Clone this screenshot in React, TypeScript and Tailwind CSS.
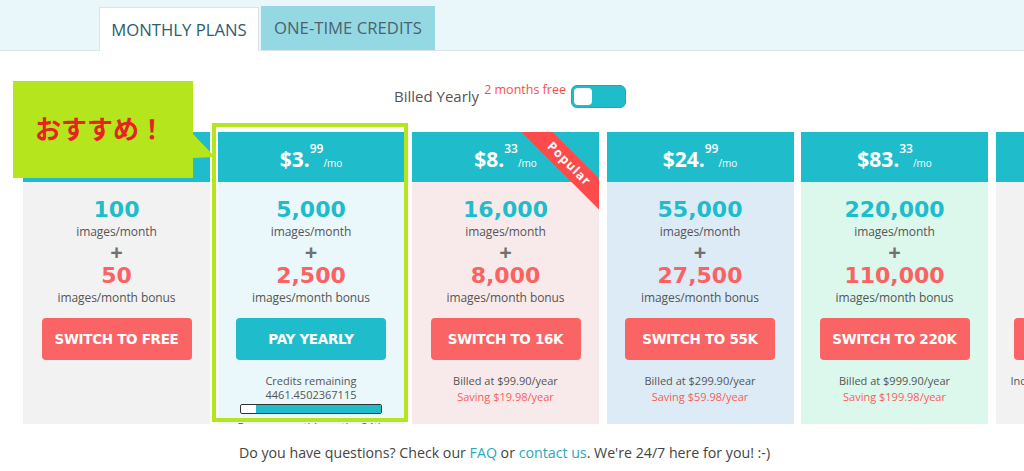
import React from "react";

type Plan = {
  dollars: string;
  cents: string;
  images: string;
  bonus: string;
  button: string;
  bg: string;
  current?: boolean;
  popular?: boolean;
  billed?: string;
  saving?: string;
  note?: string;
};

const plans: Plan[] = [
  { dollars: "$0.", cents: "00", images: "100", bonus: "50", button: "SWITCH TO FREE", bg: "bg-[#f2f2f2]" },
  { dollars: "$3.", cents: "99", images: "5,000", bonus: "2,500", button: "PAY YEARLY", bg: "bg-[#eaf7fb]", current: true },
  {
    dollars: "$8.",
    cents: "33",
    images: "16,000",
    bonus: "8,000",
    button: "SWITCH TO 16K",
    bg: "bg-[#f8eaea]",
    popular: true,
    billed: "Billed at $99.90/year",
    saving: "Saving $19.98/year",
  },
  {
    dollars: "$24.",
    cents: "99",
    images: "55,000",
    bonus: "27,500",
    button: "SWITCH TO 55K",
    bg: "bg-[#ddebf7]",
    billed: "Billed at $299.90/year",
    saving: "Saving $59.98/year",
  },
  {
    dollars: "$83.",
    cents: "33",
    images: "220,000",
    bonus: "110,000",
    button: "SWITCH TO 220K",
    bg: "bg-[#dcf7ec]",
    billed: "Billed at $999.90/year",
    saving: "Saving $199.98/year",
  },
  {
    dollars: "$416.",
    cents: "66",
    images: "1,000,000",
    bonus: "500,000",
    button: "SWITCH TO 1M",
    bg: "bg-[#f2f2f2]",
    note: "Includes priority email support",
  },
];

const credits = 4461.4502367115;
const total = 5000;

function PlanCard({ plan }: { plan: Plan }) {
  const num = "font-['DejaVu_Sans',sans-serif] font-bold text-[22px] leading-[28px]";
  return (
    <div className="relative w-[187px] shrink-0">
      <div className="relative w-full overflow-hidden">
        <div className="h-[50px] bg-[#1fbdcb] flex items-center justify-center text-white">
          <div className="flex items-start mt-[4px]">
            <span className="text-[21px] font-bold leading-[26px]">{plan.dollars}</span>
            <span className="text-[12px] font-semibold leading-[12px] -mt-[3px]">{plan.cents}</span>
            <span className="text-[10px] leading-[12px] mt-[11px]">/mo</span>
          </div>
        </div>
        <div className={`h-[242px] overflow-hidden pt-[14px] text-center text-[#555] ${plan.bg}`}>
          <div className={`${num} text-[#1fbdcb]`}>{plan.images}</div>
          <div className="text-[12px] leading-[16px] tracking-[-0.1px]">images/month</div>
          <div className="text-[22px] font-bold leading-[22px] text-[#707070]">+</div>
          <div className={`${num} text-[#fb6262]`}>{plan.bonus}</div>
          <div className="text-[12px] leading-[16px] tracking-[-0.1px]">images/month bonus</div>
          <button
            className={`block mx-auto mt-[12px] h-[42px] w-[150px] rounded-[4px] text-white font-['DejaVu_Sans',sans-serif] font-bold text-[13.5px] tracking-[-0.3px] ${
              plan.current ? "bg-[#1fbdcb]" : "bg-[#fb6464]"
            }`}
          >
            {plan.button}
          </button>
          {plan.current && (
            <div className="mt-[14px] text-[11px] leading-[14px]">
              <div>Credits remaining</div>
              <div>{credits}</div>
              <div className="mx-auto mt-[2px] h-[10px] w-[142px] rounded-[2px] border border-[#333] bg-white flex justify-end overflow-hidden">
                <div className="h-full bg-[#1fbdcb]" style={{ width: `${(credits / total) * 100}%` }} />
              </div>
              <div className="mt-[6px]">Renews monthly on the 24th</div>
            </div>
          )}
          {plan.billed && (
            <div className="mt-[13px] text-[11px] leading-[16px]">
              <div>{plan.billed}</div>
              <div className="text-[#fc5c5c]">{plan.saving}</div>
            </div>
          )}
          {plan.note && (
            <div className="mt-[13px] text-[11px] leading-[16px] whitespace-nowrap">{plan.note}</div>
          )}
        </div>
        {plan.popular && (
          <div className="absolute left-[95px] top-[21px] w-[124px] h-[22px] rotate-45 bg-[#fd4a4a] flex items-center justify-center text-white text-[12.5px] font-bold tracking-[1px]">
            Popular
          </div>
        )}
      </div>
      {plan.current && (
        <div className="absolute -left-[6px] -right-[3px] -top-[9px] bottom-[2px] border-[4px] border-[#b5e61d] pointer-events-none" />
      )}
    </div>
  );
}

export default function App() {
  return (
    <div className="relative w-[1024px] h-[471px] overflow-hidden bg-white font-['Open_Sans','Noto_Sans_CJK_JP',sans-serif]">
      <div className="h-[51px] bg-[#e9f6fa] border-b border-[#d9e5ea] flex items-end pl-[99px] gap-[2px]">
        <div className="h-[44px] w-[160px] -mb-px bg-white border border-b-0 border-[#d9e5ea] flex items-center justify-center text-[16.7px] text-[#2e5c73]">
          MONTHLY PLANS
        </div>
        <div className="h-[44px] w-[174px] bg-[#94d8e4] flex items-center justify-center text-[16.7px] text-[#4c636b]">
          ONE-TIME CREDITS
        </div>
      </div>

      <div className="pt-[33px] flex justify-center items-center h-[57px] pr-[4px]">
        <span className="text-[15px] text-[#555]">Billed Yearly</span>
        <span className="ml-[5px] -mt-[12px] text-[12.5px] text-[#ff4b4b]">2 months free</span>
        <div className="ml-[5px] w-[55px] h-[23px] rounded-[6px] bg-[#1fbdcb] border border-[#1aa9b6] p-[2px]">
          <div className="w-[18px] h-[17px] rounded-[4px] bg-white" />
        </div>
      </div>

      <div className="mt-[24px] flex gap-[7.5px] pl-[23px]">
        {plans.map((p) => (
          <PlanCard key={p.button} plan={p} />
        ))}
      </div>

      <p className="mt-[19px] pr-[15px] text-center text-[14.2px] leading-[20px] text-[#444]">
        Do you have questions? Check our <a className="text-[#2aa9b8]">FAQ</a> or{" "}
        <a className="text-[#2aa9b8]">contact us</a>. We're 24/7 here for you! :-)
      </p>

      <div className="absolute left-[13px] top-[81px] w-[180px] h-[97px] bg-[#b5e61d] flex items-center pl-[22px] pb-[4px]">
        <span className="font-['Noto_Sans_CJK_JP',sans-serif] font-bold text-[26px] text-[#e8231f]">
          おすすめ！
        </span>
      </div>
      <svg className="absolute left-[192px] top-[133px]" width="24" height="26" viewBox="0 0 24 26">
        <polygon points="0,0 23,24 0,25" fill="#b5e61d" />
      </svg>
    </div>
  );
}
